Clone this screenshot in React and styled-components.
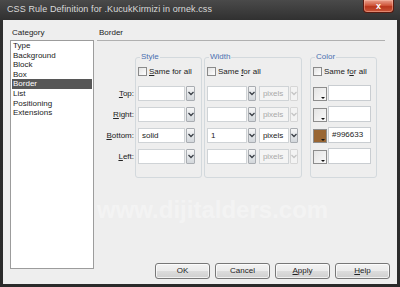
import React from "react";
import styled, { createGlobalStyle } from "styled-components";

const GlobalStyle = createGlobalStyle`
  html, body {
    margin: 0;
    padding: 0;
    background: #2c2c2c;
  }
  body {
    font-family: "Liberation Sans", Arial, sans-serif;
  }
  u {
    text-decoration-thickness: 1px;
    text-underline-offset: 1px;
  }
`;

const Window = styled.div`
  position: relative;
  width: 400px;
  height: 287px;
  display: flex;
  flex-direction: column;
  background: linear-gradient(#4a4a4a, #2e2e2e 22px, #2a2a2a);
  overflow: hidden;
`;

const TitleBar = styled.div`
  height: 20px;
  display: flex;
  align-items: flex-start;
  padding-left: 7px;
`;

const Title = styled.span`
  font-size: 9px;
  line-height: 19px;
  color: #dadada;
  letter-spacing: 0.1px;
`;

const CloseButton = styled.div`
  margin-left: auto;
  margin-right: 6px;
  width: 31px;
  height: 13px;
  box-sizing: border-box;
  border: 1px solid #5a1a10;
  border-top: none;
  border-radius: 0 0 4px 4px;
  background: linear-gradient(#e9a08e, #d0573c 45%, #b8361c 55%, #c9563a);
  box-shadow: inset 0 0 0 1px rgba(255, 200, 180, 0.45);
  color: #fff;
  font-size: 9px;
  font-weight: bold;
  line-height: 12px;
  text-align: center;
`;

const Client = styled.div`
  flex: 1;
  margin: 0 3px 3px 3px;
  background: #eeeeee;
  display: flex;
  gap: 3px;
  padding: 7px 7px 5px 7px;
  font-size: 8px;
  color: #222;
`;

const LeftCol = styled.div`
  width: 84px;
  display: flex;
  flex-direction: column;
`;

const Caption = styled.div`
  height: 13px;
  line-height: 11px;
  padding-left: 2px;
`;

const CategoryList = styled.div`
  flex: 1;
  margin-bottom: 10px;
  background: #fff;
  border: 1px solid #9c9c9c;
  padding: 0 1px;
`;

const CategoryItem = styled.div`
  height: 9.6px;
  line-height: 9.6px;
  padding-left: 1px;
  background: ${(p) => (p.$selected ? "#575757" : "transparent")};
  color: ${(p) => (p.$selected ? "#fff" : "#222")};
`;

const RightCol = styled.div`
  flex: 1;
  display: flex;
  flex-direction: column;
`;

const SectionHeader = styled.div`
  height: 13px;
  line-height: 11px;
  padding-left: 2px;
  margin-right: 5px;
  border-bottom: 1px solid #b0b0b0;
`;

const Groups = styled.div`
  display: flex;
  margin-top: 11px;
`;

const LabelCol = styled.div`
  width: 37px;
  margin-right: 1px;
  padding-top: 34px;
  display: flex;
  flex-direction: column;
  gap: 6px;
`;

const RowLabel = styled.div`
  height: 15px;
  line-height: 15px;
  text-align: right;
`;

const Group = styled.fieldset`
  width: ${(p) => p.$width}px;
  box-sizing: border-box;
  margin: 0 ${(p) => p.$gap || 0}px 0 0;
  padding: 0 3px 13px 2px;
  border: 1px solid #d3d9dd;
  border-radius: 3px;
  min-width: 0;
`;

const Legend = styled.legend`
  padding: 0 1px;
  margin-left: 2px;
  font-size: 8px;
  line-height: 10px;
  color: #4a6fb0;
`;

const CheckRow = styled.div`
  height: 18px;
  display: flex;
  align-items: center;
  gap: 2px;
  margin-bottom: 6px;
  white-space: nowrap;
`;

const CheckBox = styled.span`
  width: 9px;
  height: 9px;
  box-sizing: border-box;
  border: 1px solid #8a8a8a;
  background: linear-gradient(135deg, #e2e2e2, #ffffff);
  flex: none;
`;

const Rows = styled.div`
  display: flex;
  flex-direction: column;
  gap: 6px;
`;

const Row = styled.div`
  height: 15px;
  display: flex;
  align-items: stretch;
  gap: ${(p) => p.$gap || 0}px;
`;

const Combo = styled.div`
  width: ${(p) => p.$width}px;
  display: flex;
  gap: 1px;
`;

const Field = styled.div`
  flex: 1;
  box-sizing: border-box;
  border: 1px solid #cfd3d6;
  background: ${(p) => (p.$disabled ? "#f4f4f4" : "#fff")};
  color: ${(p) => (p.$disabled ? "#a8a8a8" : "#222")};
  padding-left: 3px;
  line-height: 13px;
  white-space: nowrap;
  overflow: hidden;
`;

const ArrowBox = styled.div`
  width: ${(p) => p.$width || 8}px;
  box-sizing: border-box;
  border: 1px solid ${(p) => (p.$disabled ? "#d6d6d6" : "#a9adb2")};
  border-radius: 1px;
  background: ${(p) =>
    p.$disabled
      ? "#f3f3f3"
      : "linear-gradient(#f6f6f6, #e4e7ea 50%, #d3d7db)"};
  display: flex;
  align-items: center;
  justify-content: center;
`;

const Swatch = styled.div`
  position: relative;
  width: 14px;
  height: 14px;
  margin-top: 1px;
  box-sizing: border-box;
  border: 1px solid #8d8d8d;
  background: ${(p) => p.$color || "linear-gradient(135deg, #e4e4e4, #fafafa)"};
  flex: none;
`;

const SwatchArrow = styled.span`
  position: absolute;
  right: 1px;
  bottom: 1px;
  width: 0;
  height: 0;
  border-left: 2px solid transparent;
  border-right: 2px solid transparent;
  border-top: 2px solid #111;
`;

const ColorInput = styled.div`
  width: 43px;
  height: 16px;
  margin-top: -1px;
  box-sizing: border-box;
  border: 1px solid #c9cdd1;
  background: #fff;
  padding-left: 3px;
  line-height: 14px;
`;

const ButtonRow = styled.div`
  margin-top: auto;
  display: flex;
  justify-content: flex-end;
  gap: 5px;
`;

const Button = styled.div`
  width: 55px;
  height: 16px;
  box-sizing: border-box;
  border: 1px solid #777;
  border-radius: 3px;
  background: linear-gradient(#f3f3f3, #ebebeb 48%, #dcdcdc 52%, #cfcfcf);
  box-shadow: inset 0 0 0 1px rgba(255, 255, 255, 0.7);
  text-align: center;
  line-height: 14px;
  font-size: 8px;
`;

const Watermark = styled.div`
  position: absolute;
  left: 97px;
  top: 196px;
  font-size: 24px;
  font-weight: bold;
  line-height: 28px;
  color: rgba(255, 255, 255, 0.35);
  pointer-events: none;
`;

const Chevron = ({ disabled }) => (
  <svg width="6" height="5" viewBox="0 0 6 5">
    <path
      d="M0.5 1 L3 3.5 L5.5 1"
      fill="none"
      stroke={disabled ? "#c4c4c4" : "#3a3f46"}
      strokeWidth="1.3"
    />
  </svg>
);

const categories = [
  "Type",
  "Background",
  "Block",
  "Box",
  "Border",
  "List",
  "Positioning",
  "Extensions",
];

const sides = [
  { key: "top", label: <><u>T</u>op:</> },
  { key: "right", label: <><u>R</u>ight:</> },
  { key: "bottom", label: <><u>B</u>ottom:</>, style: "solid", width: "1", color: "#996633" },
  { key: "left", label: <><u>L</u>eft:</> },
];

export default function App() {
  return (
    <>
      <GlobalStyle />
      <Window>
        <TitleBar>
          <Title>CSS Rule Definition for .KucukKirmizi in ornek.css</Title>
          <CloseButton>x</CloseButton>
        </TitleBar>
        <Client>
          <LeftCol>
            <Caption>Category</Caption>
            <CategoryList>
              {categories.map((c) => (
                <CategoryItem key={c} $selected={c === "Border"}>
                  {c}
                </CategoryItem>
              ))}
            </CategoryList>
          </LeftCol>
          <RightCol>
            <SectionHeader>Border</SectionHeader>
            <Groups>
              <LabelCol>
                {sides.map((s) => (
                  <RowLabel key={s.key}>{s.label}</RowLabel>
                ))}
              </LabelCol>

              <Group $width={67} $gap={2}>
                <Legend>Style</Legend>
                <CheckRow>
                  <CheckBox />
                  <span>
                    <u>S</u>ame for all
                  </span>
                </CheckRow>
                <Rows>
                  {sides.map((s) => (
                    <Row key={s.key}>
                      <Combo $width={57}>
                        <Field>{s.style || ""}</Field>
                        <ArrowBox $width={9}>
                          <Chevron />
                        </ArrowBox>
                      </Combo>
                    </Row>
                  ))}
                </Rows>
              </Group>

              <Group $width={98} $gap={8}>
                <Legend>Width</Legend>
                <CheckRow>
                  <CheckBox />
                  <span>
                    Same <u>f</u>or all
                  </span>
                </CheckRow>
                <Rows>
                  {sides.map((s) => (
                    <Row key={s.key} $gap={3}>
                      <Combo $width={50}>
                        <Field>{s.width || ""}</Field>
                        <ArrowBox $width={8}>
                          <Chevron />
                        </ArrowBox>
                      </Combo>
                      <Combo $width={40}>
                        <Field $disabled={!s.width}>pixels</Field>
                        <ArrowBox $width={8} $disabled={!s.width}>
                          <Chevron disabled={!s.width} />
                        </ArrowBox>
                      </Combo>
                    </Row>
                  ))}
                </Rows>
              </Group>

              <Group $width={67}>
                <Legend>Color</Legend>
                <CheckRow>
                  <CheckBox />
                  <span>
                    Same f<u>o</u>r all
                  </span>
                </CheckRow>
                <Rows>
                  {sides.map((s) => (
                    <Row key={s.key} $gap={1}>
                      <Swatch $color={s.color}>
                        <SwatchArrow />
                      </Swatch>
                      <ColorInput>{s.color || ""}</ColorInput>
                    </Row>
                  ))}
                </Rows>
              </Group>
            </Groups>
            <ButtonRow>
              <Button>OK</Button>
              <Button>Cancel</Button>
              <Button>
                <u>A</u>pply
              </Button>
              <Button>
                <u>H</u>elp
              </Button>
            </ButtonRow>
          </RightCol>
        </Client>
        <Watermark>www.dijitalders.com</Watermark>
      </Window>
    </>
  );
}
